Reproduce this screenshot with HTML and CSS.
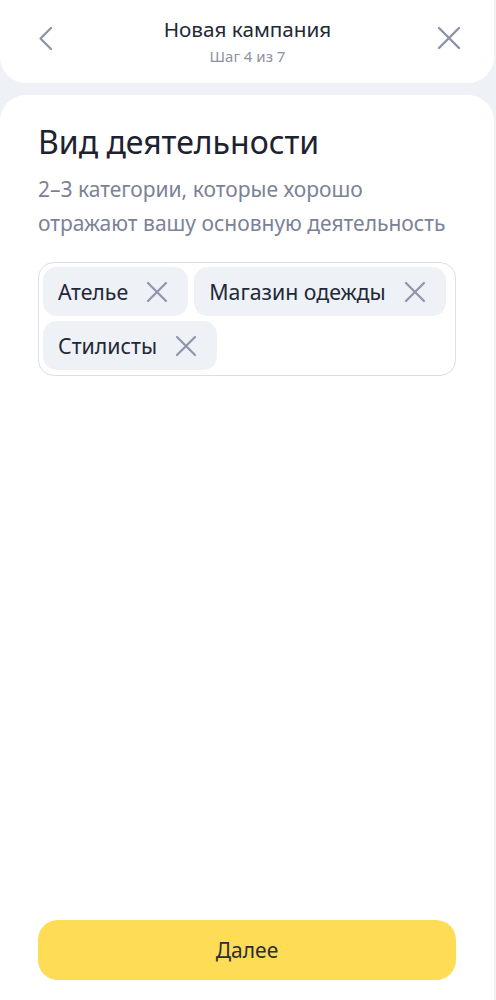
FILE: index.html
```html
<!DOCTYPE html>
<html lang="ru">
<head>
<meta charset="utf-8">
<title>Новая кампания</title>
<link rel="stylesheet" href="styles.css">
</head>
<body>
<div class="app">
  <header class="topbar">
    <button class="icon-btn" aria-label="Назад">
      <svg width="24" height="24" viewBox="0 0 24 24"><path d="M17 2 L6.5 12.5 L17 23" fill="none" stroke="#8b93a7" stroke-width="2.2" stroke-linecap="round" stroke-linejoin="round"/></svg>
    </button>
    <div class="titles">
      <div class="title">Новая кампания</div>
      <div class="step">Шаг 4 из 7</div>
    </div>
    <button class="icon-btn" aria-label="Закрыть">
      <svg width="24" height="24" viewBox="0 0 24 24"><path d="M2 2 L22 22 M22 2 L2 22" fill="none" stroke="#8b93a7" stroke-width="2.4" stroke-linecap="round"/></svg>
    </button>
  </header>
  <main class="card">
    <h1 class="heading">Вид деятельности</h1>
    <p class="hint">2–3 категории, которые хорошо<br>отражают вашу основную деятельность</p>
    <div class="chips">
      <span class="chip">Ателье<svg class="x" width="22" height="22" viewBox="0 0 22 22"><path d="M2 2 L20 20 M20 2 L2 20" fill="none" stroke="#8d96aa" stroke-width="2.2" stroke-linecap="round"/></svg></span>
      <span class="chip">Магазин одежды<svg class="x" width="22" height="22" viewBox="0 0 22 22"><path d="M2 2 L20 20 M20 2 L2 20" fill="none" stroke="#8d96aa" stroke-width="2.2" stroke-linecap="round"/></svg></span>
      <span class="chip">Стилисты<svg class="x" width="22" height="22" viewBox="0 0 22 22"><path d="M2 2 L20 20 M20 2 L2 20" fill="none" stroke="#8d96aa" stroke-width="2.2" stroke-linecap="round"/></svg></span>
    </div>
    <div class="spacer"></div>
    <button class="next">Далее</button>
  </main>
</div>
</body>
</html>
```

FILE: styles.css
```css
* { box-sizing: border-box; }
html, body { margin: 0; padding: 0; }
body {
  background: #eef1f6;
  font-family: "Noto Sans", "Open Sans", sans-serif;
  color: #1f2533;
}
.app {
  display: flex;
  flex-direction: column;
  height: 1000px;
  gap: 12px;
  padding-right: 2px;
}
.topbar {
  height: 83px;
  background: #fff;
  border-radius: 0 0 26px 26px;
  display: flex;
  align-items: center;
  justify-content: space-between;
  padding: 0 32px 8px 33px;
}
.icon-btn {
  border: 0;
  background: none;
  padding: 0;
  width: 26px;
  height: 26px;
  display: flex;
  align-items: center;
  justify-content: center;
}
.titles {
  text-align: center;
  padding-top: 6px;
}
.title {
  font-size: 20.7px;
  line-height: 26px;
  color: #222836;
}
.step {
  font-size: 15px;
  line-height: 20px;
  color: #8c92a0;
  margin-top: 4px;
}
.card {
  flex: 1;
  background: #fff;
  border-radius: 26px 26px 0 0;
  padding: 26px 38px 20px 38px;
  display: flex;
  flex-direction: column;
}
.heading {
  margin: 0;
  font-weight: 400;
  font-size: 32px;
  line-height: 42px;
  color: #1d2230;
}
.hint {
  margin: 9px 0 0;
  font-size: 21px;
  line-height: 34px;
  color: #7b8297;
  white-space: nowrap;
}
.chips {
  margin-top: 22px;
  border: 1.5px solid #dcdfe6;
  border-radius: 16px;
  padding: 4px 4px 5px;
  display: flex;
  flex-wrap: wrap;
  gap: 5px 6px;
}
.chip {
  display: inline-flex;
  align-items: center;
  height: 49px;
  background: #eef1f6;
  border-radius: 14px;
  padding: 0 20px 0 15px;
  font-size: 21.3px;
  color: #222836;
  gap: 18px;
}
.spacer { flex: 1; }
.next {
  height: 60px;
  border: 0;
  border-radius: 20px;
  background: #fedc55;
  font-family: inherit;
  font-size: 21px;
  color: #2a2e38;
}
```
